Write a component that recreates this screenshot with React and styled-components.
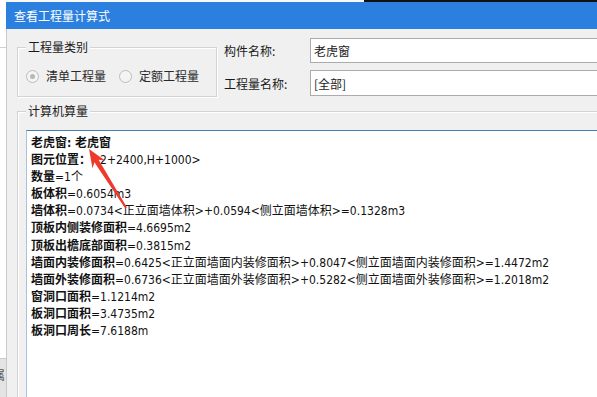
import React from "react";
import styled, { createGlobalStyle } from "styled-components";

const Global = createGlobalStyle`
  html, body { margin: 0; padding: 0; background: #fff; }
  body { font-family: "Noto Sans CJK SC", sans-serif; }
`;

const Screen = styled.div`
  position: relative;
  display: flex;
  width: 597px;
  height: 397px;
  overflow: hidden;
  background: #fff;
`;

const BackStrip = styled.div`
  display: flex;
  flex-direction: column;
  width: 6px;
  flex: none;
  background: #fff;
  overflow: hidden;
`;
const BackRule = styled.div`
  height: ${(p) => p.h}px;
  flex: none;
  border-bottom: 1px solid #cfcfcf;
`;
const BackTab = styled.div`
  margin-top: auto;
  height: 32px;
  background: #e4e4e4;
  border-top: 1px solid #c9c9c9;
  font-size: 12px;
  line-height: 20px;
  color: #555;
  padding-top: 6px;
  text-indent: -7px;
  white-space: nowrap;
`;

const Main = styled.div`
  display: flex;
  flex-direction: column;
  flex: none;
  width: 700px;
`;
const TopStrip = styled.div`
  display: flex;
  height: 2px;
  flex: none;
`;
const StripPart = styled.div`
  width: ${(p) => p.w}px;
  flex: ${(p) => (p.w ? "none" : 1)};
  background: ${(p) => p.bg};
`;

const Dialog = styled.div`
  display: flex;
  flex-direction: column;
  flex: 1;
  background: #f0f0f0;
`;
const TitleBar = styled.div`
  height: 27px;
  flex: none;
  background: #2b7fdf;
  color: #fff;
  font-size: 12px;
  line-height: 27px;
  padding-left: 8px;
`;
const Body = styled.div`
  flex: 1;
  display: flex;
  flex-direction: column;
  padding: 9px 0 0 10px;
  border-left: 1px solid #c9c9c9;
  font-size: 12px;
  color: #1a1a1a;
`;

const TopRow = styled.div`
  display: flex;
  align-items: flex-start;
`;
const GroupBox = styled.div`
  position: relative;
  border: 1px solid #d3d3d3;
  box-shadow: inset 1px 1px 0 #fff, 1px 1px 0 #fff;
  margin-top: ${(p) => p.top || 0}px;
  width: ${(p) => (p.w ? `${p.w}px` : "auto")};
  height: ${(p) => (p.h ? `${p.h}px` : "auto")};
  flex: ${(p) => (p.w ? "none" : 1)};
  display: flex;
  flex-direction: column;
`;
const Legend = styled.span`
  position: absolute;
  top: -9px;
  left: 8px;
  padding: 0 2px;
  background: #f0f0f0;
  line-height: 16px;
  font-size: 12px;
  color: #1a1a1a;
`;
const RadioRow = styled.div`
  display: flex;
  align-items: center;
  gap: 13px;
  padding: 20px 0 0 8px;
`;
const RadioItem = styled.label`
  display: flex;
  align-items: center;
  gap: 7px;
  color: #2a2a2a;
  line-height: 16px;
`;
const RadioDot = styled.span`
  width: 11px;
  height: 11px;
  border-radius: 50%;
  border: 1px solid #bcbcbc;
  background: #f4f4f4;
  display: flex;
  align-items: center;
  justify-content: center;
  &::after {
    content: "";
    width: 5px;
    height: 5px;
    border-radius: 50%;
    background: ${(p) => (p.checked ? "#b8b8b8" : "transparent")};
  }
`;

const Fields = styled.div`
  flex: 1;
  display: flex;
  flex-direction: column;
  gap: 7px;
  margin-left: 7px;
`;
const FieldRow = styled.div`
  display: flex;
  align-items: center;
`;
const FieldLabel = styled.span`
  width: 86px;
  flex: none;
`;
const Input = styled.div`
  flex: 1;
  height: ${(p) => p.h}px;
  box-sizing: border-box;
  border: 1px solid #ababab;
  background: #fff;
  padding-left: 3px;
  display: flex;
  align-items: center;
`;

const CalcGroup = styled(GroupBox)`
  flex: 1;
  margin-top: 14px;
  padding: 18px 0 0 8px;
  border-bottom: none;
  border-right: none;
`;
const TextArea = styled.div`
  flex: 1;
  background: #fff;
  border-top: 1px solid #4780b4;
  border-left: 1px solid #a9c3de;
  padding: 4px 0 0 4px;
  font-family: "DejaVu Sans Condensed", "Open Sans", "Noto Sans CJK SC", sans-serif;
  font-size: 12px;
  line-height: 17.1px;
  color: #111;
`;
const Line = styled.div`
  white-space: nowrap;
  font-weight: ${(p) => (p.bold ? 700 : 400)};
`;
const Name = styled.b`
  font-weight: 700;
`;

const ArrowLayer = styled.svg`
  position: absolute;
  left: 0;
  top: 0;
  pointer-events: none;
`;

const lines = [
  ["图元位置：", "<2+2400,H+1000>"],
  ["数量", "=1个"],
  ["板体积", "=0.6054m3"],
  ["墙体积", "=0.0734<正立面墙体积>+0.0594<侧立面墙体积>=0.1328m3"],
  ["顶板内侧装修面积", "=4.6695m2"],
  ["顶板出檐底部面积", "=0.3815m2"],
  ["墙面内装修面积", "=0.6425<正立面墙面内装修面积>+0.8047<侧立面墙面内装修面积>=1.4472m2"],
  ["墙面外装修面积", "=0.6736<正立面墙面外装修面积>+0.5282<侧立面墙面外装修面积>=1.2018m2"],
  ["窗洞口面积", "=1.1214m2"],
  ["板洞口面积", "=3.4735m2"],
  ["板洞口周长", "=7.6188m"],
];

export default function App() {
  return (
    <>
      <Global />
      <Screen>
        <BackStrip>
          <BackRule h={47} />
          <BackTab>属</BackTab>
        </BackStrip>
        <Main>
          <TopStrip>
            <StripPart w={358} bg="#f7f7f7" />
            <StripPart bg="#111" />
          </TopStrip>
          <Dialog>
            <TitleBar>查看工程量计算式</TitleBar>
            <Body>
              <TopRow>
                <GroupBox w={198} h={48} top={9}>
                  <Legend>工程量类别</Legend>
                  <RadioRow>
                    <RadioItem>
                      <RadioDot checked />
                      清单工程量
                    </RadioItem>
                    <RadioItem>
                      <RadioDot />
                      定额工程量
                    </RadioItem>
                  </RadioRow>
                </GroupBox>
                <Fields>
                  <FieldRow>
                    <FieldLabel>构件名称:</FieldLabel>
                    <Input h={25}>老虎窗</Input>
                  </FieldRow>
                  <FieldRow>
                    <FieldLabel>工程量名称:</FieldLabel>
                    <Input h={26}>[全部]</Input>
                  </FieldRow>
                </Fields>
              </TopRow>
              <CalcGroup>
                <Legend>计算机算量</Legend>
                <TextArea>
                  <Line bold>老虎窗: 老虎窗</Line>
                  {lines.map(([name, rest]) => (
                    <Line key={name}>
                      <Name>{name}</Name>
                      {rest}
                    </Line>
                  ))}
                </TextArea>
              </CalcGroup>
            </Body>
          </Dialog>
        </Main>
        <ArrowLayer width="597" height="397" viewBox="0 0 597 397">
          <polygon
            points="89,149 105,160.5 98.6,159.8 127,207.4 125.3,208.6 94.4,162.3 92.5,168.5"
            fill="#ee3a2b"
          />
        </ArrowLayer>
      </Screen>
    </>
  );
}
